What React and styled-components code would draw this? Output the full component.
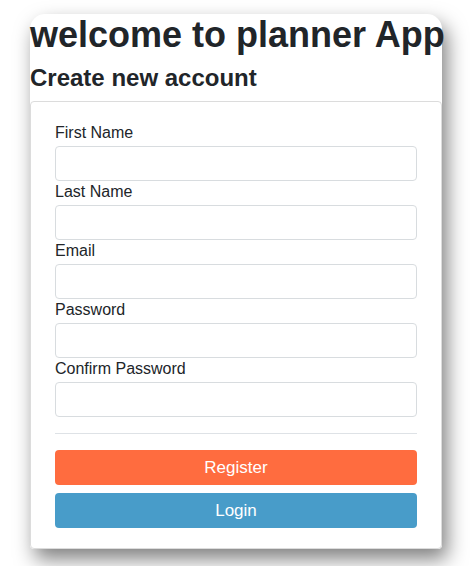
import styled, { createGlobalStyle } from 'styled-components';
import { useState } from 'react';

const GlobalStyle = createGlobalStyle`
  body {
    margin: 0;
    background: #fff;
    font-family: 'Liberation Sans', Arial, sans-serif;
    color: #212529;
  }
`;

const fields = [
  { name: 'firstName', label: 'First Name', type: 'text' },
  { name: 'lastName', label: 'Last Name', type: 'text' },
  { name: 'email', label: 'Email', type: 'email' },
  { name: 'password', label: 'Password', type: 'password' },
  { name: 'confirmPassword', label: 'Confirm Password', type: 'password' },
];

const App = () => {
  const [values, setValues] = useState({});

  const handleChange = (e) => {
    setValues({ ...values, [e.target.name]: e.target.value });
  };

  const onSubmit = (e) => {
    e.preventDefault();
  };

  return (
    <>
      <GlobalStyle />
      <Page>
        <Wrapper>
          <Title>welcome to planner App</Title>
          <SubTitle>Create new account</SubTitle>
          <Card onSubmit={onSubmit}>
            {fields.map((f) => (
              <Field key={f.name}>
                <Label htmlFor={f.name}>{f.label}</Label>
                <Input
                  id={f.name}
                  name={f.name}
                  type={f.type}
                  value={values[f.name] || ''}
                  onChange={handleChange}
                />
              </Field>
            ))}
            <Divider />
            <Button type='submit' $color='#ff6c3f'>
              Register
            </Button>
            <Button type='button' $color='#489cc9'>
              Login
            </Button>
          </Card>
        </Wrapper>
      </Page>
    </>
  );
};

const Page = styled.main`
  padding: 14px 0 30px 30px;
`;

const Wrapper = styled.section`
  width: 412px;
  background: #fff;
  border-radius: 15px 15px 4px 4px;
  box-shadow: 5px 10px 20px rgba(0, 0, 0, 0.5);
`;

const Title = styled.h1`
  margin: 0 0 9px;
  font-size: 36px;
  font-weight: 700;
  line-height: 41px;
  white-space: nowrap;
`;

const SubTitle = styled.h2`
  margin: 0 0 9px;
  font-size: 24px;
  font-weight: 700;
  line-height: 28px;
`;

const Card = styled.form`
  display: flex;
  flex-direction: column;
  padding: 20px 24px 20px;
  border: 1px solid #dcdcdc;
  border-radius: 4px;
`;

const Field = styled.div`
  display: flex;
  flex-direction: column;
`;

const Label = styled.label`
  font-size: 16px;
  line-height: 22px;
  margin-bottom: 2px;
`;

const Input = styled.input`
  box-sizing: border-box;
  height: 35px;
  width: 100%;
  border: 1px solid #d8dcdf;
  border-radius: 4px;
  padding: 6px 12px;
  font-size: 16px;
  font-family: inherit;
  outline: none;
`;

const Divider = styled.hr`
  width: 100%;
  margin: 16px 0;
  border: 0;
  border-top: 1px solid #dee2e6;
`;

const Button = styled.button`
  height: 35px;
  width: 100%;
  border: 0;
  border-radius: 4px;
  background: ${(p) => p.$color};
  color: #fff;
  font-size: 17px;
  font-family: inherit;
  cursor: pointer;
  & + & {
    margin-top: 8px;
  }
`;

export default App;
